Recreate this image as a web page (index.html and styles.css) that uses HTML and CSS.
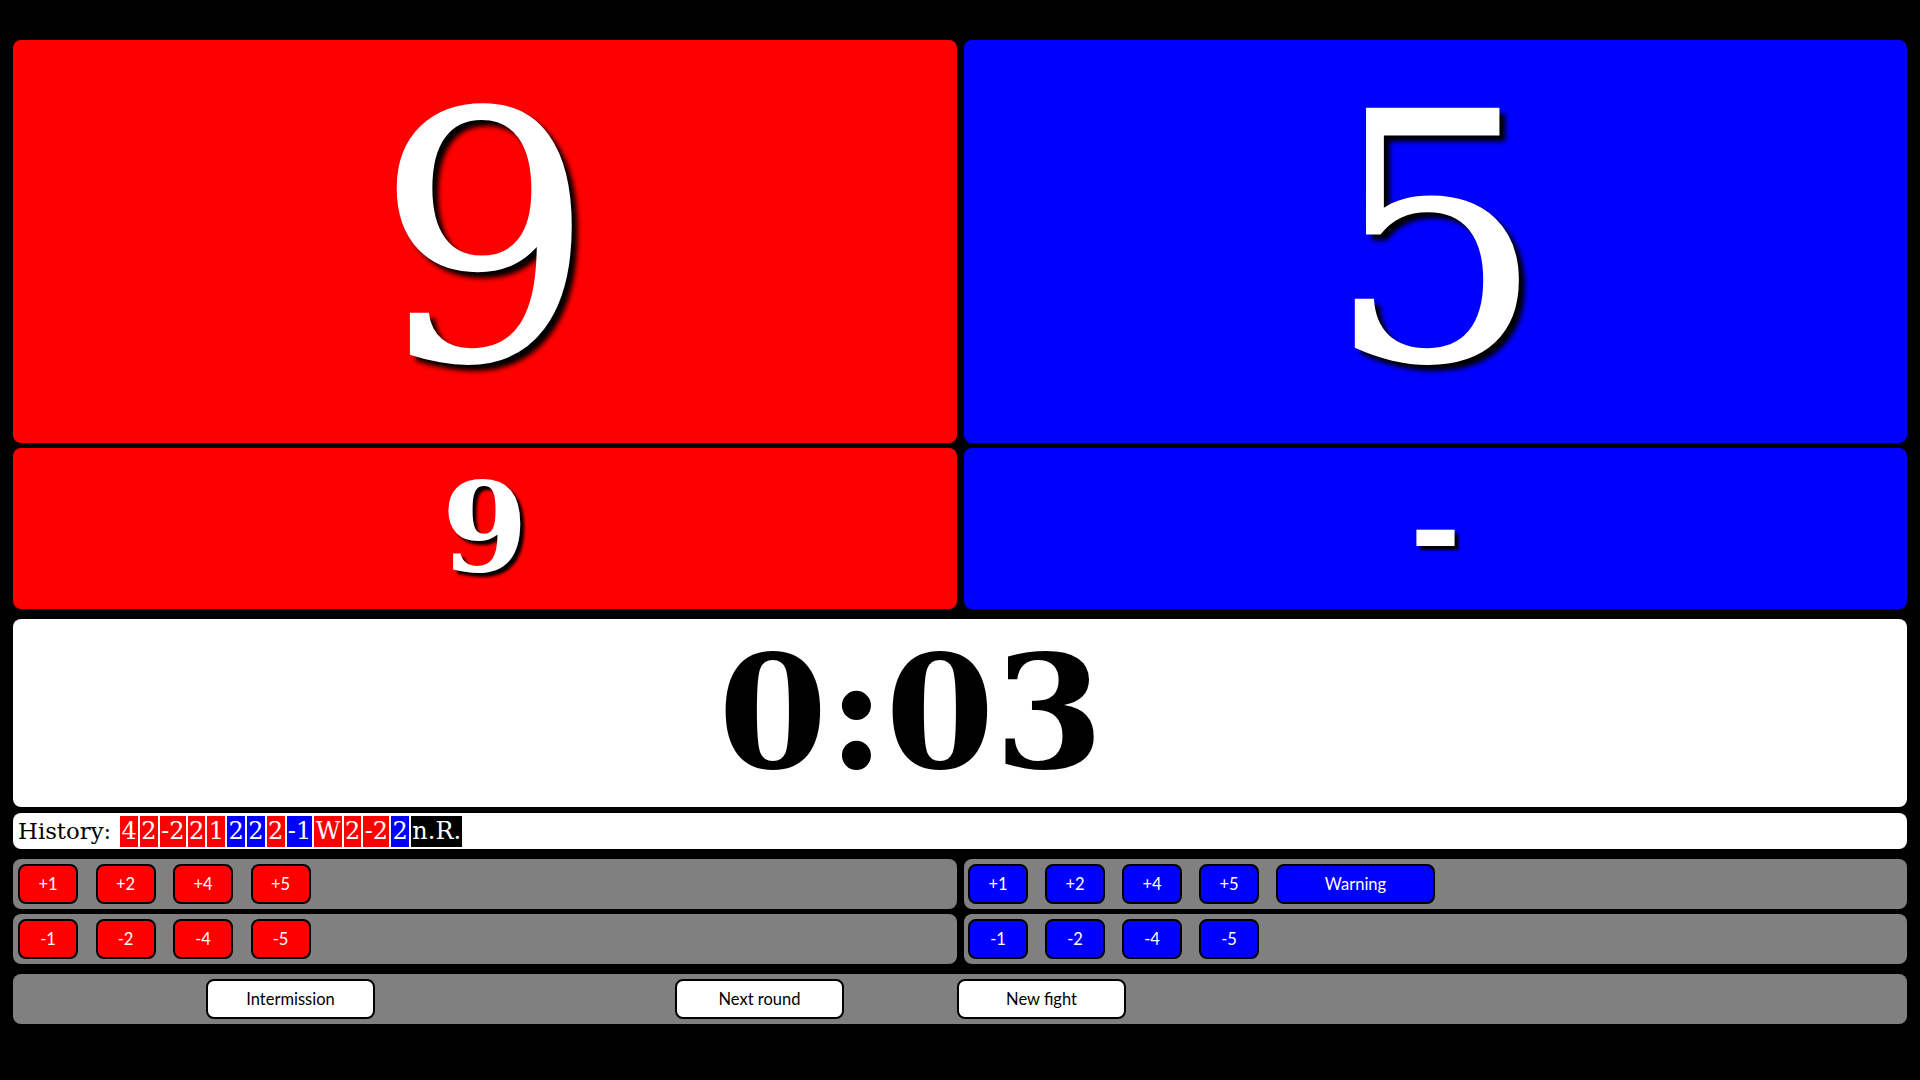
FILE: index.html
```html
<!DOCTYPE html>
<html>
<head>
<meta charset="utf-8">
<title>Scoreboard</title>
<link rel="stylesheet" href="styles.css">
</head>
<body>
<div class="board">
  <div class="pair score-row">
    <div class="panel red big">9</div>
    <div class="panel blue big">5</div>
  </div>
  <div class="pair sub-row">
    <div class="panel red sub">9</div>
    <div class="panel blue sub">-</div>
  </div>
  <div class="timer"><span class="time">0:03</span></div>
  <div class="history">
    <span class="hist-label">History:</span>
    <span class="chips">
      <span class="chip r">4</span><span class="chip r">2</span><span class="chip r">-2</span><span class="chip r">2</span><span class="chip r">1</span><span class="chip b">2</span><span class="chip b">2</span><span class="chip r">2</span><span class="chip b">-1</span><span class="chip r">W</span><span class="chip r">2</span><span class="chip r">-2</span><span class="chip b">2</span><span class="chip k">n.R.</span>
    </span>
  </div>
  <div class="pair ctrl-row first">
    <div class="ctrl">
      <button class="btn btn-red">+1</button>
      <button class="btn btn-red">+2</button>
      <button class="btn btn-red">+4</button>
      <button class="btn btn-red">+5</button>
    </div>
    <div class="ctrl">
      <button class="btn btn-blue">+1</button>
      <button class="btn btn-blue">+2</button>
      <button class="btn btn-blue">+4</button>
      <button class="btn btn-blue">+5</button>
      <button class="btn btn-blue wide">Warning</button>
    </div>
  </div>
  <div class="pair ctrl-row second">
    <div class="ctrl">
      <button class="btn btn-red">-1</button>
      <button class="btn btn-red">-2</button>
      <button class="btn btn-red">-4</button>
      <button class="btn btn-red">-5</button>
    </div>
    <div class="ctrl">
      <button class="btn btn-blue">-1</button>
      <button class="btn btn-blue">-2</button>
      <button class="btn btn-blue">-4</button>
      <button class="btn btn-blue">-5</button>
    </div>
  </div>
  <div class="bottom-row">
    <button class="btn btn-white intermission">Intermission</button>
    <button class="btn btn-white next-round">Next round</button>
    <button class="btn btn-white new-fight">New fight</button>
  </div>
</div>
</body>
</html>
```
FILE: styles.css
```css
html, body {
  margin: 0;
  padding: 0;
  background: #000;
}

body {
  width: 1920px;
  height: 1080px;
  overflow: hidden;
  font-family: "DejaVu Serif", serif;
}

.board {
  padding: 40px 13px 0 13px;
  display: flex;
  flex-direction: column;
}

.pair {
  display: grid;
  grid-template-columns: 944px 943px;
  column-gap: 7px;
}

.panel {
  border-radius: 8px;
  display: flex;
  align-items: center;
  justify-content: center;
  color: #fff;
  overflow: hidden;
}

.red { background: #ff0000; }
.blue { background: #0000ff; }

.score-row .panel {
  height: 403px;
}

.big {
  font-size: 346px;
  line-height: 1.164;
  text-shadow: 6px 6px 5px #000;
}

.sub-row {
  margin-top: 5px;
}

.sub-row .panel {
  height: 161px;
}

.sub {
  font-size: 124px;
  font-weight: bold;
  line-height: 1.164;
  text-shadow: 4px 4px 3px #000;
}

.timer {
  margin-top: 10px;
  height: 188px;
  background: #fff;
  border-radius: 8px;
  display: flex;
  align-items: center;
  justify-content: center;
  padding-right: 98px;
}

.time {
  font-size: 157px;
  font-weight: bold;
  color: #000;
  line-height: 1.164;
}

.history {
  margin-top: 6px;
  height: 36px;
  background: #fff;
  border-radius: 8px;
  display: flex;
  align-items: center;
  padding-left: 5px;
  font-size: 24px;
  color: #000;
}

.hist-label {
  font-size: 22.8px;
  margin-right: 9px;
}

.chips {
  display: flex;
  gap: 2px;
}

.chip {
  display: block;
  color: #fff;
  padding: 0 1.25px;
  height: 31px;
  line-height: 31px;
}

.chip.r { background: #ff0000; }
.chip.b { background: #0000ff; }
.chip.k { background: #000; }

.ctrl-row.first {
  margin-top: 10px;
}

.ctrl-row.second {
  margin-top: 5px;
}

.ctrl {
  height: 50px;
  background: #808080;
  border-radius: 8px;
  display: flex;
  align-items: center;
  gap: 17.5px;
  padding-left: 5px;
  box-sizing: border-box;
}

.ctrl-row .ctrl:nth-child(2) {
  padding-left: 4px;
  gap: 17px;
}

.btn {
  font-family: "Lato", "Noto Sans", sans-serif;
  font-size: 16.5px;
  height: 40px;
  width: 60px;
  border: 2px solid #000;
  border-radius: 8px;
  padding: 0;
  box-sizing: border-box;
  cursor: pointer;
}

.btn-red {
  background: #ff0000;
  color: #fff;
}

.btn-blue {
  background: #0000ff;
  color: #fff;
}

.btn.wide {
  width: 159px;
}

.btn-white {
  background: #fff;
  color: #000;
  width: 169px;
}

.bottom-row {
  margin-top: 10px;
  height: 50px;
  background: #808080;
  border-radius: 8px;
  display: flex;
  align-items: center;
  padding-left: 193px;
}

.next-round {
  margin-left: 300px;
}

.new-fight {
  margin-left: 113px;
}
```
